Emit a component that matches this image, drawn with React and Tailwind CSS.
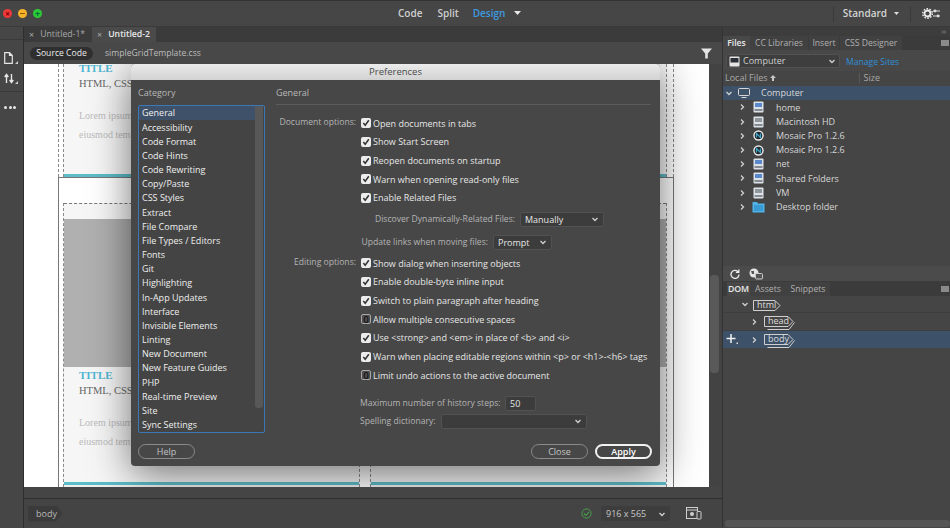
import React from "react";

const F = { fontFamily: '"Open Sans", sans-serif' };

const cats = ["General","Accessibility","Code Format","Code Hints","Code Rewriting","Copy/Paste","CSS Styles","Extract","File Compare","File Types / Editors","Fonts","Git","Highlighting","In-App Updates","Interface","Invisible Elements","Linting","New Document","New Feature Guides","PHP","Real-time Preview","Site","Sync Settings"];

function Chev({ dir = "down", className = "", color = "#d0d0d0" }) {
  const d = dir === "down" ? "M1.5 3 L4 5.5 L6.5 3" : "M3 1.5 L5.5 4 L3 6.5";
  return (
    <svg width="8" height="8" viewBox="0 0 8 8" className={`shrink-0 ${className}`}>
      <path d={d} fill="none" stroke={color} strokeWidth="1.3" />
    </svg>
  );
}

function Check({ on, label }) {
  return (
    <div className="h-[18.7px] flex items-center">
      <div className={`w-[10px] h-[10px] rounded-[2px] flex items-center justify-center shrink-0 ${on ? "bg-[#ececec]" : "border border-[#a8a8a8] bg-[#4c4c4c]"}`}>
        {on && (
          <svg width="8" height="8" viewBox="0 0 8 8">
            <path d="M1.3 4 L3.2 6.2 L6.8 1.2" fill="none" stroke="#333" strokeWidth="1.5" />
          </svg>
        )}
      </div>
      <span className="ml-[2px] text-[#e6e6e6] whitespace-nowrap font-medium">{label}</span>
    </div>
  );
}

function OptionGroup({ title, items }) {
  return (
    <div className="flex">
      <div className="w-[80px] shrink-0 mr-[5px] text-[8.6px] text-[#b4b4b4] whitespace-nowrap h-[18.7px] leading-[16px] flex justify-end">{title}</div>
      <div className="flex flex-col">
        {items.map((i) => <Check key={i[0]} label={i[0]} on={i[1]} />)}
      </div>
    </div>
  );
}

function Select({ w, text }) {
  return (
    <div className={`h-[15px] rounded-[2px] bg-[#3c3c3c] border border-[#525252] flex items-center justify-between pl-[4px] pr-[4px] text-[9px] text-[#e6e6e6] font-medium ${w}`}>
      <span>{text}</span>
      <Chev />
    </div>
  );
}

function Pill({ children, primary }) {
  return (
    <div className={`w-[57px] h-[15px] rounded-full flex items-center justify-center ${primary ? "border-2 border-[#f2f2f2] text-white font-semibold" : "border border-[#8a8a8a] text-[#c4c4c4]"}`}>
      {children}
    </div>
  );
}

function Drive({ kind }) {
  if (kind === "folder")
    return (
      <svg width="13" height="12" viewBox="0 0 13 12">
        <path d="M0.5 1 H5 L6 2.5 H12.5 V11.5 H0.5 Z" fill="#4fb3e8" />
        <rect x="2" y="4" width="9" height="6" fill="#3a9bd4" />
      </svg>
    );
  if (kind === "net")
    return (
      <svg width="11" height="11" viewBox="0 0 11 11">
        <circle cx="5.5" cy="5.5" r="5.2" fill="#e8e8e8" />
        <circle cx="5.5" cy="5.5" r="3.8" fill="#23282c" />
        <path d="M3.5 7.5 V3.5 L7.5 7.5 V3.5" fill="none" stroke="#3fa7c9" strokeWidth="1.2" />
      </svg>
    );
  const c = kind === "hd" ? "#8f969c" : "#5a88cc";
  return (
    <svg width="11" height="12" viewBox="0 0 11 12">
      <rect x="0.5" y="0.5" width="10" height="11" rx="1" fill="#dde2e8" />
      <rect x="2" y="2" width="7" height="4" fill={c} />
      <rect x="1.5" y="8" width="8" height="2" fill="#858b92" />
    </svg>
  );
}

function FileRow({ kind, label }) {
  return (
    <div className="h-[14.2px] flex items-center text-[#d6d6d6] whitespace-nowrap">
      <Chev dir="right" className="ml-[15px]" />
      <div className="w-[13px] ml-[5.5px] flex justify-center"><Drive kind={kind} /></div>
      <span className="ml-[11.5px]">{label}</span>
    </div>
  );
}

function Tag({ label, stack }) {
  const w = label === "html" ? 29 : 31;
  return (
    <div className="relative h-[14px]" style={{ width: w }}>
      <svg className="absolute left-0 top-0" width={w} height="15" viewBox={`0 0 ${w} 15`}>
        {stack && <path d={`M3.5 13.5 H${w - 6} L${w - 0.5} 6.5`} fill="none" stroke="#cfcfcf" strokeWidth="1" />}
        <path d={`M0.5 0.5 H${w - 7} L${w - 2} 5.5 L${w - 7} 10.5 H0.5 Z`} fill="none" stroke="#cfcfcf" strokeWidth="1" />
      </svg>
      <span className="absolute left-[4px] top-0 leading-[10px] text-[#dcdcdc] font-medium">{label}</span>
    </div>
  );
}

function CardCol({ top, hideText }) {
  return (
    <div className="flex-1 border-x border-dashed border-[#8a8a8a] bg-[#f6f6f6] flex flex-col overflow-hidden">
      {!top && <div className="h-[16px] shrink-0 border-t border-dashed border-[#777]" />}
      {!top && <div className="h-[148px] shrink-0 bg-[#b0b0b0]" />}
      {!hideText && (
        <div className={`pl-[15px] ${top ? "-mt-[3px]" : "pt-[1px]"}`} style={{ fontFamily: '"Liberation Serif", serif' }}>
          <div className="text-[11px] font-bold text-[#4fb6d3] leading-[14px]">TITLE</div>
          <div className="text-[10.5px] text-[#666] mt-[2px] leading-[14px]">HTML, CSS,</div>
          <div className="text-[10px] text-[#bbb] mt-[18px] leading-[14px]">Lorem ipsum</div>
          <div className="text-[10px] text-[#bbb] mt-[5px] leading-[14px]">eiusmod temp</div>
        </div>
      )}
      <div className="mt-auto h-[3px] shrink-0 bg-[#5cbcc8]" />
      {!top && <div className="h-[2px] shrink-0 bg-[#f0f0f0]" />}
    </div>
  );
}

export default function App() {
  return (
    <div className="w-[950px] h-[528px] overflow-hidden flex flex-col bg-[#444444] text-[9px]" style={F}>
      {/* title bar */}
      <div className="h-[27px] shrink-0 flex items-center bg-[#464646] border-t border-[#333] border-b border-b-[#3a3a3a]">
        <div className="flex ml-[3px] gap-[6px]">
          <div className="w-[9px] h-[9px] rounded-full bg-[#f0393b] flex items-center justify-center text-[#700] text-[8px] font-bold leading-none">×</div>
          <div className="w-[9px] h-[9px] rounded-full bg-[#f5b32a] flex items-center justify-center"><div className="w-[5px] h-[1.5px] bg-[#8a5a00]" /></div>
          <div className="w-[9px] h-[9px] rounded-full bg-[#2ccb36] flex items-center justify-center text-[#063] text-[9px] font-bold leading-none">+</div>
        </div>
        <div className="ml-[356px] flex items-center text-[10px] font-semibold text-[#cfcfcf] whitespace-nowrap">
          <span>Code</span>
          <span className="ml-[15px]">Split</span>
          <span className="ml-[14px] text-[#3d9be0]">Design</span>
          <svg width="7" height="5" viewBox="0 0 7 5" className="ml-[9px]"><path d="M0 0 H7 L3.5 4 Z" fill="#e8e8e8" /></svg>
        </div>
        <div className="ml-auto flex items-center">
          <div className="w-px h-[16px] bg-[#3a3a3a]" />
          <span className="ml-[9px] text-[10px] font-semibold text-[#d4d4d4]">Standard</span>
          <svg width="5" height="3" viewBox="0 0 5 3" className="ml-[7px]"><path d="M0 0 H5 L2.5 3 Z" fill="#ddd" /></svg>
          <div className="w-px h-[16px] bg-[#3a3a3a] ml-[11px]" />
          <svg width="20" height="11" viewBox="0 0 20 11" className="ml-[11px] mr-[8px]">
            <circle cx="5.5" cy="5.5" r="3" fill="none" stroke="#eee" strokeWidth="1.8" />
            <circle cx="5.5" cy="5.5" r="4.8" fill="none" stroke="#eee" strokeWidth="1.4" strokeDasharray="1.6 1.4" />
            <path d="M11 3 H18 M11 8 H18" stroke="#ddd" strokeWidth="1" />
            <circle cx="13" cy="3" r="1.4" fill="#ddd" />
            <circle cx="16" cy="8" r="1.4" fill="#ddd" />
          </svg>
        </div>
      </div>

      <div className="flex-1 flex min-h-0">
        {/* left toolbar */}
        <div className="w-[23px] shrink-0 bg-[#464646] border-r border-[#2e2e2e] flex flex-col box-content">
          <div className="mt-[12px] w-full h-px bg-[#3a3a3a]" />
          <div className="mt-[12px] ml-[4px] flex items-end">
            <svg width="9" height="12" viewBox="0 0 9 12">
              <path d="M0.7 0.7 H5.5 L8.3 3.5 V11.3 H0.7 Z M5.5 0.7 V3.5 H8.3" fill="none" stroke="#e6e6e6" strokeWidth="1.2" />
            </svg>
            <svg width="3" height="3" viewBox="0 0 3 3" className="ml-[2px]"><path d="M3 0 V3 H0 Z" fill="#ccc" /></svg>
          </div>
          <div className="mt-[9px] ml-[4px] flex items-end">
            <svg width="10" height="11" viewBox="0 0 10 11">
              <path d="M2.5 10 V2 M0.7 4 L2.5 1.5 L4.3 4 M7.5 1 V9 M5.7 7 L7.5 9.5 L9.3 7" fill="none" stroke="#e6e6e6" strokeWidth="1.4" />
            </svg>
            <svg width="3" height="3" viewBox="0 0 3 3" className="ml-[1px]"><path d="M3 0 V3 H0 Z" fill="#ccc" /></svg>
          </div>
          <div className="mt-[7px] w-full h-px bg-[#3a3a3a]" />
          <div className="mt-[14px] ml-[4px] flex gap-[1.5px]">
            <div className="w-[3px] h-[3px] rounded-full bg-[#e6e6e6]" />
            <div className="w-[3px] h-[3px] rounded-full bg-[#e6e6e6]" />
            <div className="w-[3px] h-[3px] rounded-full bg-[#e6e6e6]" />
          </div>
        </div>

        {/* center */}
        <div className="w-[698px] shrink-0 flex flex-col min-h-0">
          {/* doc tabs */}
          <div className="h-[15px] shrink-0 bg-[#3b3b3b] flex items-stretch whitespace-nowrap text-[8.7px]">
            <div className="w-[68px] flex items-center pl-[5px] text-[#a8a8a8]"><span className="mr-[6px] text-[9px]">×</span>Untitled-1*</div>
            <div className="w-[64px] bg-[#4a4a4a] flex items-center pl-[5px] text-[#e8e8e8] font-semibold"><span className="mr-[6px] text-[9px] font-normal text-[#aaa]">×</span>Untitled-2</div>
          </div>
          {/* related files */}
          <div className="h-[22px] shrink-0 bg-[#484848] flex items-center whitespace-nowrap text-[8.6px]">
            <div className="ml-[6px] h-[13px] w-[63px] justify-center rounded-full bg-[#2f2f2f] text-[#ececec] flex items-center font-medium">Source Code</div>
            <span className="ml-[12px] text-[#bdbdbd]">simpleGridTemplate.css</span>
            <svg width="11" height="11" viewBox="0 0 11 11" className="ml-auto mr-[10px]"><path d="M0 0.5 H11 L6.8 5.5 V10.5 H4.2 V5.5 Z" fill="#e4e4e4" /></svg>
          </div>
          {/* canvas + scrollbar */}
          <div className="h-[423px] shrink-0 flex">
            <div className="w-[685px] bg-white relative overflow-hidden">
              <div className="absolute left-[34px] top-0 w-[616px] h-[113px] flex gap-[10px] bg-white border-x border-dashed border-[#888] pl-[4px] pr-[6px]">
                <CardCol top />
                <CardCol top hideText />
              </div>
              <div className="absolute left-[34px] top-[113px] w-[616px] h-[310px] bg-white border-l border-t border-r border-[#777] pl-[4px] pr-[6px] flex flex-col">
                <div className="h-[25px] shrink-0 bg-white" />
                <div className="flex-1 flex gap-[10px] min-h-0">
                  <CardCol />
                  <CardCol hideText />
                </div>
              </div>

              {/* dialog */}
              <div className="absolute left-[107px] top-0 w-[529px] h-[402px] rounded-[4px] bg-[#474747] flex flex-col overflow-hidden shadow-[0_8px_40px_rgba(0,0,0,0.55)]">
                <div className="h-[16px] shrink-0 bg-gradient-to-b from-[#ebebeb] to-[#d2d2d2] text-[#4a4a4a] flex items-center justify-center text-[9.5px] font-medium">Preferences</div>
                <div className="flex-1 flex min-h-0">
                  <div className="w-[145px] shrink-0 pl-[7px] flex flex-col">
                    <div className="h-[25px] pt-[6px] text-[#b8b8b8]">Category</div>
                    <div className="w-[127px] h-[328px] rounded-[2px] border border-[#3b78b5] flex bg-[#444]">
                      <div className="flex-1 flex flex-col">
                        {cats.map((c, i) => (
                          <div key={c} className={`h-[14.18px] shrink-0 flex items-center pl-[3px] whitespace-nowrap text-[#efefef] font-medium ${i === 0 ? "bg-[#3f5168]" : ""}`}>{c}</div>
                        ))}
                      </div>
                      <div className="w-[8px] shrink-0 mr-[1px] h-[302px] bg-[#585858] rounded-b-[3px]" />
                    </div>
                    <div className="mt-[11px]"><Pill>Help</Pill></div>
                  </div>
                  <div className="w-[375px] flex flex-col">
                    <div className="h-[25px] shrink-0 pt-[6px] text-[#b8b8b8] border-b border-[#5c5c5c]">General</div>
                    <div className="mt-[9px]">
                      <OptionGroup title="Document options:" items={[["Open documents in tabs",1],["Show Start Screen",1],["Reopen documents on startup",1],["Warn when opening read-only files",1],["Enable Related Files",1]]} />
                    </div>
                    <div className="h-[23px] mt-[0.5px] flex items-center justify-end pr-[47px] whitespace-nowrap text-[8.6px] text-[#b4b4b4]">
                      <span className="mr-[5px]">Discover Dynamically-Related Files:</span>
                      <Select w="w-[84px]" text="Manually" />
                    </div>
                    <div className="h-[23px] flex items-center pr-[99px] justify-end whitespace-nowrap text-[8.6px] text-[#b4b4b4]">
                      <span className="mr-[5px]">Update links when moving files:</span>
                      <Select w="w-[59px]" text="Prompt" />
                    </div>
                    <OptionGroup title="Editing options:" items={[["Show dialog when inserting objects",1],["Enable double-byte inline input",1],["Switch to plain paragraph after heading",1],["Allow multiple consecutive spaces",0],["Use <strong> and <em> in place of <b> and <i>",1],["Warn when placing editable regions within <p> or <h1>-<h6> tags",1],["Limit undo actions to the active document",0]]} />
                    <div className="mt-[11px] ml-[84px] flex items-center h-[15px] whitespace-nowrap text-[8.6px] text-[#b4b4b4]">
                      <span>Maximum number of history steps:</span>
                      <div className="ml-auto mr-[115px] w-[31px] h-[15px] bg-[#3c3c3c] border border-[#525252] rounded-[2px] flex items-center pl-[4px] text-[9px] text-[#e6e6e6] font-medium">50</div>
                    </div>
                    <div className="mt-[3px] ml-[84px] flex items-center h-[15px] whitespace-nowrap text-[8.6px] text-[#b4b4b4]">
                      <span>Spelling dictionary:</span>
                      <div className="ml-auto mr-[64px]"><Select w="w-[146px]" text="" /></div>
                    </div>
                    <div className="mt-[15px] flex justify-end gap-[7px] w-[376px]">
                      <Pill>Close</Pill>
                      <Pill primary>Apply</Pill>
                    </div>
                  </div>
                </div>
              </div>
            </div>
            <div className="flex-1 bg-[#434343] relative">
              <div className="absolute left-[1px] w-[9px] top-[211px] h-[98px] bg-[#595959] rounded-[4px]" />
            </div>
          </div>
          <div className="h-[11px] shrink-0 bg-[#454545] border-b border-[#2f2f2f] box-content" />
          {/* status bar */}
          <div className="flex-1 flex items-center bg-[#444] whitespace-nowrap">
            <div className="ml-[4px] h-[16px] w-[35px] bg-[#3b3b3b] flex items-center pl-[8px] text-[#b8b8b8] [clip-path:polygon(0_0,80%_0,100%_50%,80%_100%,0_100%)]">body</div>
            <svg width="11" height="11" viewBox="0 0 11 11" className="ml-[518px]">
              <circle cx="5.5" cy="5.5" r="4.6" fill="none" stroke="#47a04a" strokeWidth="1" />
              <path d="M3 5.5 L5 7.5 L8 3.8" fill="none" stroke="#47a04a" strokeWidth="1.1" />
            </svg>
            <div className="ml-[9px] w-[69px] h-[15px] bg-[#3d3d3d] rounded-[2px] flex items-center justify-between pl-[5px] pr-[4px] text-[#c8c8c8]">
              <span>916 x 565</span><Chev />
            </div>
            <svg width="16" height="13" viewBox="0 0 16 13" className="ml-[16px]">
              <rect x="0.5" y="0.5" width="11" height="11" fill="none" stroke="#cfcfcf" />
              <path d="M0.5 3 H11.5" stroke="#cfcfcf" />
              <rect x="11" y="4.5" width="4" height="7.5" rx="0.7" fill="#444" stroke="#cfcfcf" />
              <circle cx="6" cy="7" r="2" fill="#cfcfcf" />
            </svg>
          </div>
        </div>

        {/* right panel */}
        <div className="flex-1 flex flex-col min-w-0 border-l border-[#333] bg-[#454545]">
          <div className="h-[9px] shrink-0 bg-[#3d3d3d] flex items-center justify-end pr-[4px] text-[#aaa] text-[7px] leading-none">››</div>
          <div className="h-[14px] shrink-0 bg-[#3b3b3b] flex items-stretch whitespace-nowrap text-[8.6px] text-[#b0b0b0]">
            <div className="w-[27px] bg-[#484848] text-[#e8e8e8] font-semibold flex items-center justify-center">Files</div>
            <div className="w-[58px] bg-[#414141] flex items-center justify-center">CC Libraries</div>
            <div className="w-[32px] bg-[#414141] border-x border-[#3b3b3b] flex items-center justify-center">Insert</div>
            <div className="w-[62px] bg-[#414141] flex items-center justify-center">CSS Designer</div>
            <div className="ml-auto mr-[1px] w-[8px] h-[6px] mt-[4px] bg-[#8a8a8a]" />
          </div>
          <div className="h-[21px] shrink-0 flex items-start bg-[#484848]">
            <div className="mt-[4px] ml-[3px] w-[114px] h-[14px] rounded-[2px] bg-[#3e3e3e] border border-[#525252] flex items-center pl-[2px] pr-[3px] text-[#d0d0d0]">
              <svg width="11" height="11" viewBox="0 0 11 11"><rect x="0.5" y="0.5" width="10" height="10" rx="1" fill="#e5e5e5" /><rect x="1.5" y="2" width="8" height="4.5" fill="#2a2f36" /></svg>
              <span className="ml-[3px]">Computer</span>
              <Chev className="ml-auto" />
            </div>
            <span className="mt-[6px] ml-[6px] text-[8.6px] text-[#2f8fd8] font-medium whitespace-nowrap">Manage Sites</span>
          </div>
          <div className="h-[14px] shrink-0 flex items-center text-[#a8a8a8] whitespace-nowrap">
            <span className="ml-[2px]">Local Files</span>
            <svg width="6" height="6" viewBox="0 0 6 6" className="ml-[2px]"><path d="M3 0 L6 3 H4 V6 H2 V3 H0 Z" fill="#c8c8c8" /></svg>
            <div className="ml-[83px] w-px h-[10px] bg-[#5a5a5a]" />
            <span className="ml-[4px]">Size</span>
          </div>
          <div className="h-[14px] shrink-0 bg-[#3d5169] flex items-center whitespace-nowrap text-[#d8d8d8] mt-px">
            <Chev className="ml-[2px]" />
            <svg width="12" height="10" viewBox="0 0 12 10" className="ml-[5px]"><rect x="0.5" y="0.5" width="11" height="7" rx="1" fill="none" stroke="#d6d6d6" /><path d="M3.5 9.5 H8.5" stroke="#d6d6d6" /></svg>
            <span className="ml-[11px]">Computer</span>
          </div>
          <div className="flex flex-col mt-[0.4px] h-[166px] shrink-0">
            <FileRow kind="drive" label="home" />
            <FileRow kind="hd" label="Macintosh HD" />
            <FileRow kind="net" label="Mosaic Pro 1.2.6" />
            <FileRow kind="net" label="Mosaic Pro 1.2.6" />
            <FileRow kind="drive" label="net" />
            <FileRow kind="drive" label="Shared Folders" />
            <FileRow kind="hd" label="VM" />
            <FileRow kind="folder" label="Desktop folder" />
          </div>
          <div className="h-[15px] shrink-0 bg-[#4b4b4b] flex items-center">
            <svg width="10" height="10" viewBox="0 0 10 10" className="ml-[7px]"><path d="M8.2 3 A4 4 0 1 0 9 5.5 M8.8 0.5 V3.4 H5.9" fill="none" stroke="#eee" strokeWidth="1.3" /></svg>
            <svg width="14" height="12" viewBox="0 0 14 12" className="ml-[9px]"><circle cx="5" cy="5" r="4.5" fill="#e4e4e4" /><path d="M2 3 H5 V6 H3 Z" fill="#555" /><rect x="6.5" y="5.5" width="7" height="5.5" rx="1" fill="#555" stroke="#ccc" /></svg>
          </div>
          <div className="h-[15px] shrink-0 bg-[#3b3b3b] flex items-stretch whitespace-nowrap text-[8.7px] text-[#b0b0b0]">
            <div className="ml-[4px] w-[23px] mt-[1px] bg-[#484848] text-[#e8e8e8] font-semibold flex items-center justify-center">DOM</div>
            <div className="w-[36px] mt-[1px] bg-[#414141] flex items-center justify-center">Assets</div>
            <div className="w-[44px] mt-[1px] bg-[#414141] flex items-center justify-center">Snippets</div>
            <div className="ml-auto mr-[1px] w-[8px] h-[6px] mt-[5px] bg-[#8a8a8a]" />
          </div>
          <div className="h-[17px] shrink-0 flex items-center border-b border-[#3e3e3e]">
            <Chev className="ml-[18px]" />
            <div className="ml-[4px] mt-[5px]"><Tag label="html" /></div>
          </div>
          <div className="h-[18px] shrink-0 flex items-center border-b border-[#3e3e3e]">
            <Chev dir="right" className="ml-[27px]" />
            <div className="ml-[6px] mt-[3px]"><Tag label="head" stack /></div>
          </div>
          <div className="h-[17px] shrink-0 flex items-center bg-[#3d5169]">
            <svg width="13" height="13" viewBox="0 0 13 13" className="ml-[3px]"><path d="M5 1 V10 M0.5 5.5 H9.5" stroke="#f2f2f2" strokeWidth="1.5" /><rect x="10.5" y="9.5" width="1.5" height="1.5" fill="#ddd" /></svg>
            <Chev dir="right" className="ml-[11px]" />
            <div className="ml-[6px] mt-[3px]"><Tag label="body" stack /></div>
          </div>
          <div className="flex-1 flex flex-col justify-end">
            <div className="ml-[2px] mb-[1px] h-[7px] bg-[#555] rounded-[3px]" />
          </div>
        </div>
      </div>
    </div>
  );
}
